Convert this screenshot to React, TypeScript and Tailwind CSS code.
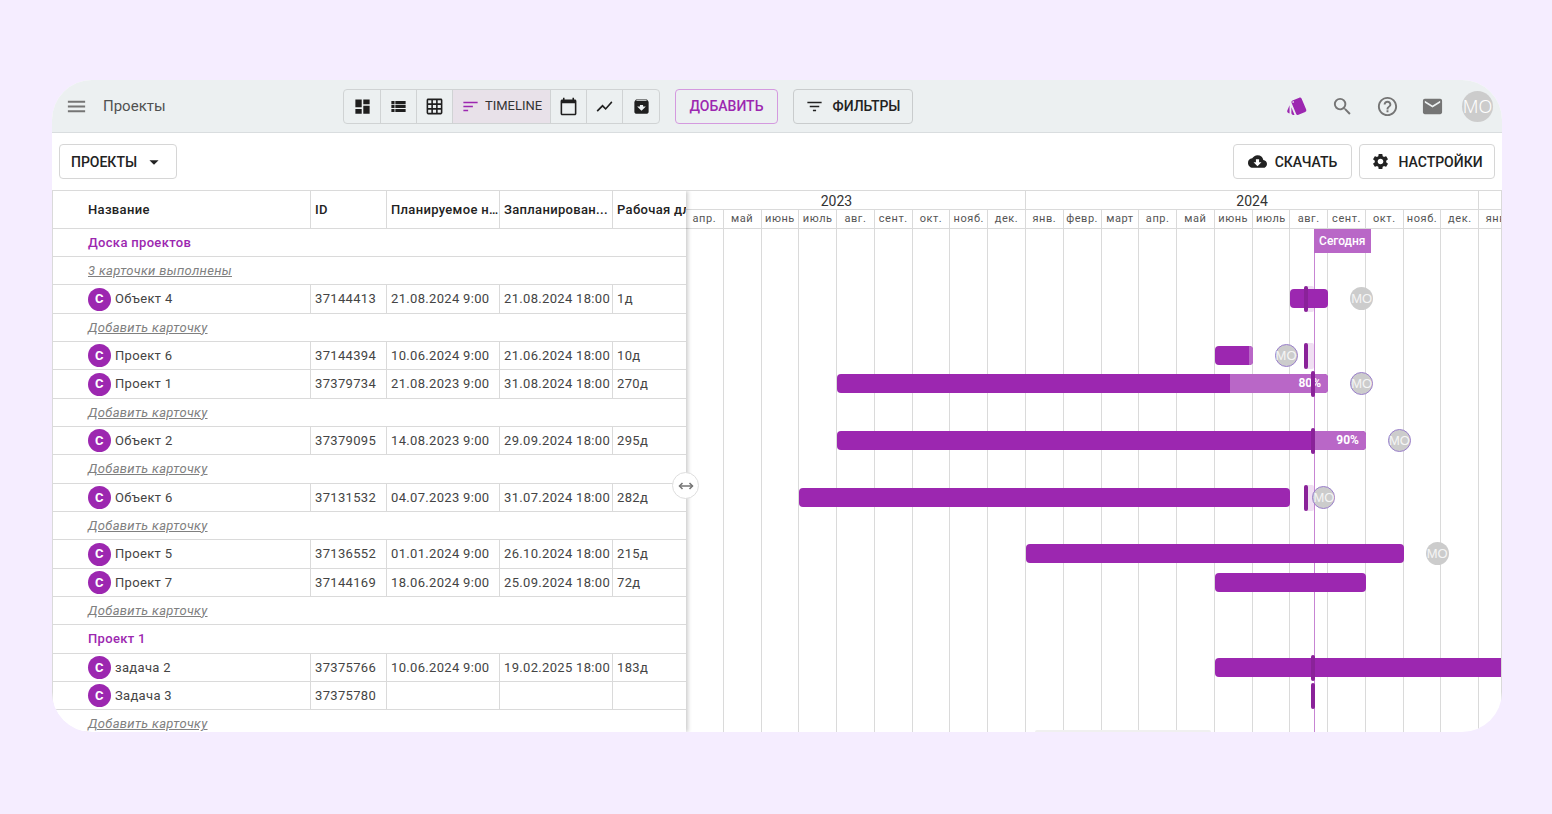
import React from 'react';
import {
    MdArchive,
    MdArrowDropDown,
    MdCalendarToday,
    MdCloudDownload,
    MdDashboard,
    MdFilterList,
    MdGridOn,
    MdHelpOutline,
    MdMail,
    MdMenu,
    MdSearch,
    MdSettings,
    MdShowChart,
    MdSort,
    MdStyle,
    MdViewList,
} from 'react-icons/md';

type Bar = {
    start: number; // grid column of the first month, 1 = april 2023
    end: number;
    progress?: number;
    label?: string;
    avatar?: 'plain' | 'ring';
};

type Row =
    | { kind: 'group'; title: string }
    | { kind: 'link'; title: string }
    | {
          kind: 'card';
          title: string;
          id: string;
          from?: string;
          to?: string;
          days?: string;
          bar?: Bar;
          marker?: number;
          tail?: boolean;
      };

const MONTHS = [
    'апр.', 'май', 'июнь', 'июль', 'авг.', 'сент.', 'окт.', 'нояб.', 'дек.',
    'янв.', 'февр.', 'март', 'апр.', 'май', 'июнь', 'июль', 'авг.', 'сент.', 'окт.', 'нояб.', 'дек.',
    'янв.',
];

const TODAY = 16.62;

const ADD: Row = { kind: 'link', title: 'Добавить карточку' };

const ROWS: Row[] = [
    { kind: 'group', title: 'Доска проектов' },
    { kind: 'link', title: '3 карточки выполнены' },
    { kind: 'card', title: 'Объект 4', id: '37144413', from: '21.08.2024 9:00', to: '21.08.2024 18:00', days: '1д', bar: { start: 17, end: 18, avatar: 'plain' }, marker: 16.37, tail: true },
    ADD,
    { kind: 'card', title: 'Проект 6', id: '37144394', from: '10.06.2024 9:00', to: '21.06.2024 18:00', days: '10д', bar: { start: 15, end: 16, progress: 90, avatar: 'ring' }, marker: 16.37, tail: true },
    { kind: 'card', title: 'Проект 1', id: '37379734', from: '21.08.2023 9:00', to: '31.08.2024 18:00', days: '270д', bar: { start: 5, end: 18, progress: 80, label: '80%', avatar: 'ring' }, marker: 16.55 },
    ADD,
    { kind: 'card', title: 'Объект 2', id: '37379095', from: '14.08.2023 9:00', to: '29.09.2024 18:00', days: '295д', bar: { start: 5, end: 19, progress: 90, label: '90%', avatar: 'ring' }, marker: 16.55 },
    ADD,
    { kind: 'card', title: 'Объект 6', id: '37131532', from: '04.07.2023 9:00', to: '31.07.2024 18:00', days: '282д', bar: { start: 4, end: 17, avatar: 'ring' }, marker: 16.37, tail: true },
    ADD,
    { kind: 'card', title: 'Проект 5', id: '37136552', from: '01.01.2024 9:00', to: '26.10.2024 18:00', days: '215д', bar: { start: 10, end: 20, avatar: 'plain' } },
    { kind: 'card', title: 'Проект 7', id: '37144169', from: '18.06.2024 9:00', to: '25.09.2024 18:00', days: '72д', bar: { start: 15, end: 19 } },
    ADD,
    { kind: 'group', title: 'Проект 1' },
    { kind: 'card', title: 'задача 2', id: '37375766', from: '10.06.2024 9:00', to: '19.02.2025 18:00', days: '183д', bar: { start: 15, end: 23 }, marker: 16.55 },
    { kind: 'card', title: 'Задача 3', id: '37375780', marker: 16.55 },
    ADD,
];

const at = (month: number) => `${(month / MONTHS.length) * 100}%`;

const VIEWS = [
    { name: 'Доска', icon: MdDashboard },
    { name: 'Список', icon: MdViewList },
    { name: 'Таблица', icon: MdGridOn },
    { name: 'Timeline', icon: MdSort, active: true },
    { name: 'Календарь', icon: MdCalendarToday },
    { name: 'Отчёты', icon: MdShowChart },
    { name: 'Архив', icon: MdArchive },
];

const TopBar: React.FC = () => (
    <header className="flex items-center h-[53px] shrink-0 bg-[#ecf0f1] border-b border-[#d9dddf] pr-[9px]">
        <div className="flex items-center w-[291px] pl-[13px] gap-[15px]">
            <button aria-label="Меню" className="text-[#757575]">
                <MdMenu size={23} />
            </button>
            <h1 className="text-[15px] text-[#505050]">Проекты</h1>
        </div>

        <div className="flex h-[35px] pl-px border border-[#d0d3d4] rounded-[4px] overflow-hidden divide-x divide-[#d0d3d4]">
            {VIEWS.map(({ name, icon: Icon, active }) =>
                active ? (
                    <button key={name} className="flex items-center justify-center gap-[5px] w-[98px] bg-[#e8e1e9] text-[13px] text-[#333]">
                        <Icon size={19} className="text-[#9c27b0]" />
                        TIMELINE
                    </button>
                ) : (
                    <button key={name} aria-label={name} className="flex items-center justify-center w-9 text-[#1f1f1f]">
                        <Icon size={19} />
                    </button>
                )
            )}
        </div>

        <button className="ml-[15px] h-[35px] w-[103px] border border-[#d49adf] rounded-[4px] text-sm font-medium text-[#9c27b0]">
            ДОБАВИТЬ
        </button>
        <button className="ml-[15px] h-[35px] w-[120px] flex items-center justify-center gap-2 border border-[#c9cccd] rounded-[4px] text-sm font-medium text-[#222]">
            <MdFilterList size={19} />
            ФИЛЬТРЫ
        </button>

        <div className="ml-auto flex items-center gap-[15px] text-[#757575]">
            <button aria-label="Карточки" className="w-[30px] flex justify-center text-[#9c27b0]">
                <MdStyle size={22} />
            </button>
            <button aria-label="Поиск" className="w-[30px] flex justify-center">
                <MdSearch size={23} />
            </button>
            <button aria-label="Помощь" className="w-[30px] flex justify-center">
                <MdHelpOutline size={23} />
            </button>
            <button aria-label="Сообщения" className="w-[30px] flex justify-center">
                <MdMail size={23} />
            </button>
            <button className="size-[31px] flex items-center justify-center rounded-full bg-[#cccccc] text-white text-lg font-['Noto_Sans',sans-serif] font-light">
                MO
            </button>
        </div>
    </header>
);

const Toolbar: React.FC = () => (
    <div className="flex items-center gap-[7px] h-[57px] shrink-0 px-[7px] text-sm font-medium text-[#222]">
        <button className="flex items-center justify-center gap-1.5 h-[35px] w-[118px] border border-[#d6d6d6] rounded-[4px]">
            ПРОЕКТЫ
            <MdArrowDropDown size={22} />
        </button>
        <button className="ml-auto flex items-center justify-center gap-2 h-[35px] w-[119px] border border-[#d6d6d6] rounded-[4px]">
            <MdCloudDownload size={19} />
            СКАЧАТЬ
        </button>
        <button className="flex items-center justify-center gap-2 h-[35px] w-[136px] border border-[#d6d6d6] rounded-[4px]">
            <MdSettings size={19} />
            НАСТРОЙКИ
        </button>
    </div>
);

const CELL = 'border-b border-r border-[#dadada] pl-1 truncate';

const CardTable: React.FC = () => (
    <table className="table-fixed w-[673px] border-separate border-spacing-0 text-[13px] tracking-wide text-[#444] text-left">
        <colgroup>
            <col className="w-[258px]" />
            <col className="w-[76px]" />
            <col className="w-[113px]" />
            <col className="w-[113px]" />
            <col className="w-[113px]" />
        </colgroup>
        <thead className="text-[#222]">
            <tr className="h-[38px]">
                <th className="border-b border-r border-[#dadada] pl-[35px] font-medium">Название</th>
                <th className={`${CELL} font-medium`}>ID</th>
                <th className={`${CELL} font-medium`}>Планируемое н...</th>
                <th className={`${CELL} font-medium`}>Запланирован...</th>
                <th className={`${CELL} font-medium`}>Рабочая дл</th>
            </tr>
        </thead>
        <tbody>
            {ROWS.map((row, i) => (
                <tr key={i} className={i % 3 === 2 ? 'h-[29px]' : 'h-7'}>
                    {row.kind === 'card' ? (
                        <>
                            <td className="border-b border-r border-[#dadada] pl-[35px]">
                                <div className="flex items-center gap-1">
                                    <span className="size-[23px] flex items-center justify-center rounded-full bg-[#9c27b0] text-white font-bold">C</span>
                                    {row.title}
                                </div>
                            </td>
                            <td className={CELL}>{row.id}</td>
                            <td className={CELL}>{row.from}</td>
                            <td className={CELL}>{row.to}</td>
                            <td className={CELL}>{row.days}</td>
                        </>
                    ) : (
                        <td colSpan={5} className="border-b border-[#dadada] pl-[35px]">
                            {row.kind === 'group' ? (
                                <span className="font-medium text-[#9c27b0]">{row.title}</span>
                            ) : (
                                <a href="#" className="italic underline text-[#808080]">{row.title}</a>
                            )}
                        </td>
                    )}
                </tr>
            ))}
        </tbody>
    </table>
);

const TimelineBar: React.FC<{ bar: Bar }> = ({ bar }) => (
    <div className="relative h-[19px]" style={{ gridColumn: `${bar.start} / ${bar.end}` }}>
        <div className="flex justify-end h-full rounded-[4px] overflow-hidden bg-[#9c27b0]">
            {bar.progress && (
                <div className="bg-[#b967c7]" style={{ width: `${100 - bar.progress}%` }} />
            )}
        </div>
        {bar.label && (
            <span className="absolute right-[7px] top-0 text-xs leading-[19px] font-bold text-white">{bar.label}</span>
        )}
        {bar.avatar && (
            <span
                className={`absolute left-full -top-0.5 ml-[22px] z-10 size-[23px] flex items-center justify-center rounded-full bg-[#cccccc] text-[#f5f5f5] text-[13px] font-['Liberation_Sans',sans-serif] ${bar.avatar === 'ring' ? 'border border-[#9a7fcb]' : ''}`}
            >
                MO
            </span>
        )}
    </div>
);

const Timeline: React.FC = () => (
    <div className="w-[831px] min-w-full">
        <div className="grid grid-cols-22 h-[19px] text-sm leading-5 text-[#333] text-center">
            <div className="col-span-9 h-[19px] border-b border-r border-[#dadada] pr-[38px]">2023</div>
            <div className="col-span-12 h-[19px] border-b border-r border-[#dadada]">2024</div>
            <div className="h-[19px] border-b border-[#dadada]" />
        </div>
        <div className="grid grid-cols-22 h-[19px] text-[11px] leading-[18px] tracking-wider text-[#555] text-center">
            {MONTHS.map((month, i) => (
                <div key={i} className="h-[19px] border-b border-r border-[#dadada]">{month}</div>
            ))}
        </div>

        <div className="relative">
            <div className="absolute inset-0 grid grid-cols-22">
                {MONTHS.map((_, i) => (
                    <div key={i} className="border-r border-[#dadada]" />
                ))}
            </div>
            <div className="absolute inset-y-0 w-px bg-[#c785d3]" style={{ left: at(TODAY) }} />
            <div
                className="absolute top-0 z-10 w-[57px] h-6 bg-[#b967c7] text-center text-xs leading-6 font-medium text-white"
                style={{ left: at(TODAY) }}
            >
                Сегодня
            </div>

            {ROWS.map((row, i) => (
                <div key={i} className={`relative grid grid-cols-22 items-start pt-1 ${i % 3 === 2 ? 'h-[29px]' : 'h-7'}`}>
                    {row.kind === 'card' && row.tail && (
                        <div className="absolute top-px h-[26px] w-2.5 rounded-[2px] bg-[#f0dff3]" style={{ left: at(row.marker!) }} />
                    )}
                    {row.kind === 'card' && row.bar && <TimelineBar bar={row.bar} />}
                    {row.kind === 'card' && row.marker && (
                        <div className="absolute top-px h-[26px] w-1 rounded-[2px] bg-[#8a2299]" style={{ left: at(row.marker) }} />
                    )}
                </div>
            ))}
        </div>
    </div>
);

const App: React.FC = () => {
    return (
        <div className="h-screen bg-[#f5edff] pt-20 pb-[82px] pl-[52px] pr-[50px] font-[Roboto,sans-serif]">
            <div className="h-full flex flex-col bg-white rounded-[40px] overflow-hidden">
                <TopBar />
                <Toolbar />
                <main className="relative flex flex-1 min-h-0 overflow-hidden border-t border-x border-[#dadada]">
                    <div className="relative w-[633px] shrink-0 z-20 bg-white shadow-[2px_0_4px_rgba(0,0,0,0.2)]">
                        <div className="h-full overflow-hidden">
                            <CardTable />
                        </div>
                        <button
                            aria-label="Изменить ширину"
                            className="absolute -right-[13px] top-[281px] size-[27px] flex items-center justify-center rounded-full border border-[#dedede] bg-white"
                        >
                            <svg viewBox="0 0 16 8" className="w-4 h-2 shrink-0" fill="none" stroke="#757575" strokeWidth="1.5">
                                <path d="M1.5 4h13" />
                                <path d="M4.5 1L1.5 4l3 3M11.5 1l3 3-3 3" />
                            </svg>
                        </button>
                    </div>
                    <div className="flex-1 min-w-0 overflow-hidden">
                        <Timeline />
                    </div>
                    <div className="absolute bottom-0 left-[982px] w-44 h-0.5 rounded-t bg-[#f0f0f0]" />
                </main>
            </div>
        </div>
    );
};

export default App;
